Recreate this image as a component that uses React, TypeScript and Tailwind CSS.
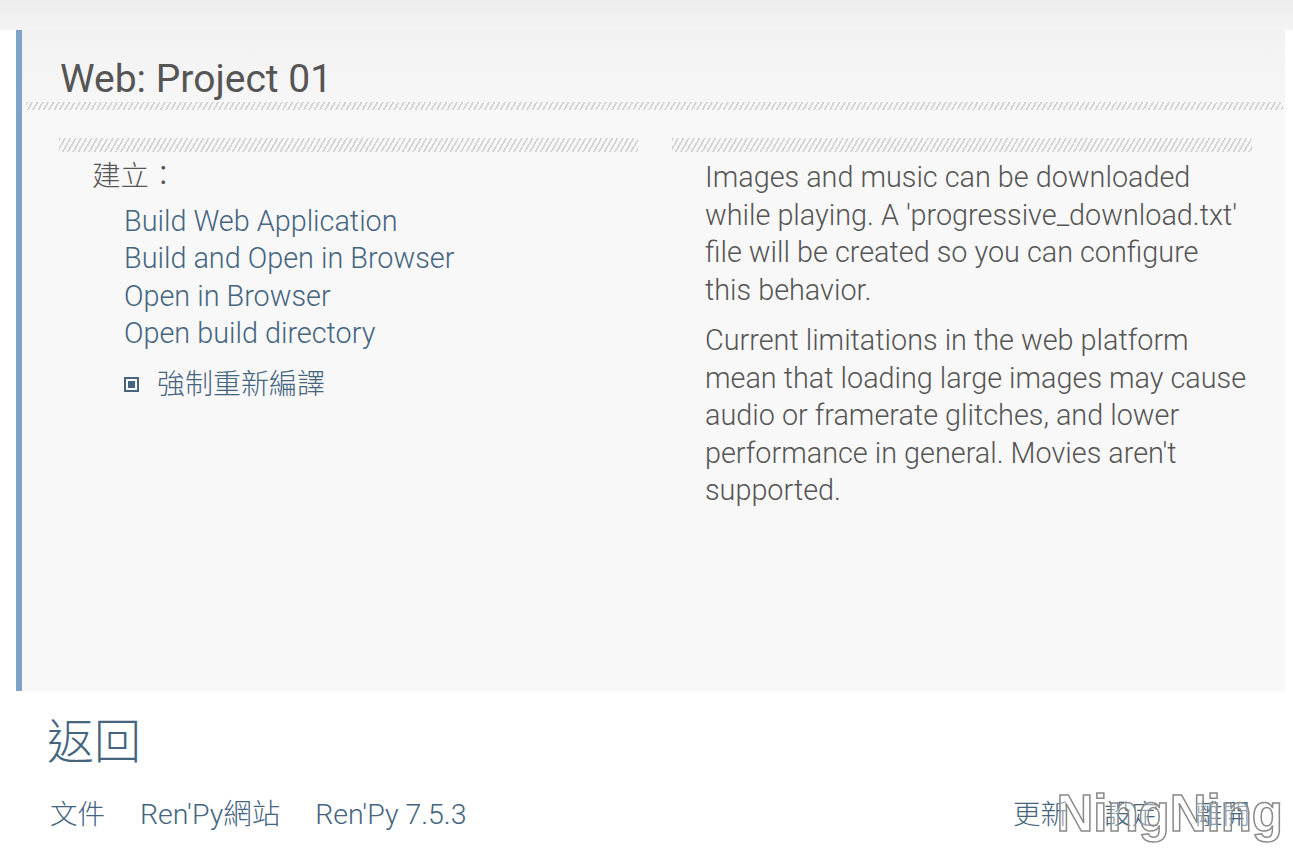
import React from 'react';

const hatch =
  'bg-[repeating-linear-gradient(120deg,#d4d4d4_0px,#d4d4d4_1.7px,transparent_1.7px,transparent_4.6px)]';

const links = ['Build Web Application', 'Build and Open in Browser', 'Open in Browser', 'Open build directory'];

export default function App() {
  return (
    <div className="h-[854px] w-[1293px] overflow-hidden bg-white font-['Roboto','Noto_Sans_CJK_TC',sans-serif] font-light">
      {/* top band */}
      <div className="h-[30px] bg-gradient-to-b from-[#ededed] to-[#f4f4f4]" />

      {/* main panel */}
      <div className="ml-[16px] mr-[8px] flex h-[661px] border-l-[6px] border-[#7fa3c6] bg-[#f8f8f8]">
        <div className="flex flex-1 flex-col">
          <div className="bg-gradient-to-b from-[#f2f2f2] to-[#f7f7f7] pl-[4px] pr-[2px]">
            <h1 className="pl-[34px] pt-[27px] text-[39px] leading-[45px] text-[#555] font-normal">Web: Project 01</h1>
            <div className={`h-[8px] ${hatch}`} />
          </div>

          <div className="flex gap-[34px] pl-[37px] pt-[28px]">
            {/* left column */}
            <div className="w-[579px]">
              <div className={`h-[14px] ${hatch}`} />
              <div className="pl-[33px] pt-[6px] text-[28.5px] leading-[37.5px] text-[#555]">建立：</div>
              <div className="pl-[65px] pt-[7px] text-[28.8px] leading-[37.5px] text-[#45657f]">
                {links.map((l) => (
                  <div key={l}>{l}</div>
                ))}
                <div className="mt-[13px] flex items-center gap-[18px]">
                  <span className="flex h-[15px] w-[15px] items-center justify-center border-[2px] border-[#45657f] bg-white">
                    <span className="h-[7px] w-[7px] bg-[#45657f]" />
                  </span>
                  <span className="text-[28px]">強制重新編譯</span>
                </div>
              </div>
            </div>

            {/* right column */}
            <div className="w-[580px]">
              <div className={`h-[14px] ${hatch}`} />
              <div className="pl-[33px] pt-[7px] text-[28.8px] leading-[37.5px] text-[#555]">
                <p className="w-[541px]">
                  Images and music can be downloaded while playing. A 'progressive_download.txt' file will be created
                  so you can configure this behavior.
                </p>
                <p className="mt-[13px] w-[550px]">
                  Current limitations in the web platform mean that loading large images may cause audio or
                  framerate glitches, and lower performance in general. Movies aren't supported.
                </p>
              </div>
            </div>
          </div>
        </div>
      </div>

      {/* bottom */}
      <div className="pl-[47px] pt-[22px] text-[47px] leading-[58px] text-[#45657f]">返回</div>
      <div className="relative mt-[24px] flex items-center pl-[50px] pr-[43px] text-[28.5px] leading-[40px] text-[#45657f]">
        <div className="flex gap-[35px]">
          <span className="text-[27.5px]">文件</span>
          <span>Ren'Py網站</span>
          <span>Ren'Py 7.5.3</span>
        </div>
        <div className="ml-auto flex gap-[36px] text-[27.5px]">
          <span>更新</span>
          <span>設定</span>
          <span>離開</span>
        </div>
        <span className="pointer-events-none absolute right-[10px] top-[-16px] font-['Liberation_Sans',sans-serif] text-[51px] font-bold leading-[70px] text-white/40 [-webkit-text-stroke:1.5px_#8a8a8a]">
          NingNing
        </span>
      </div>
    </div>
  );
}
